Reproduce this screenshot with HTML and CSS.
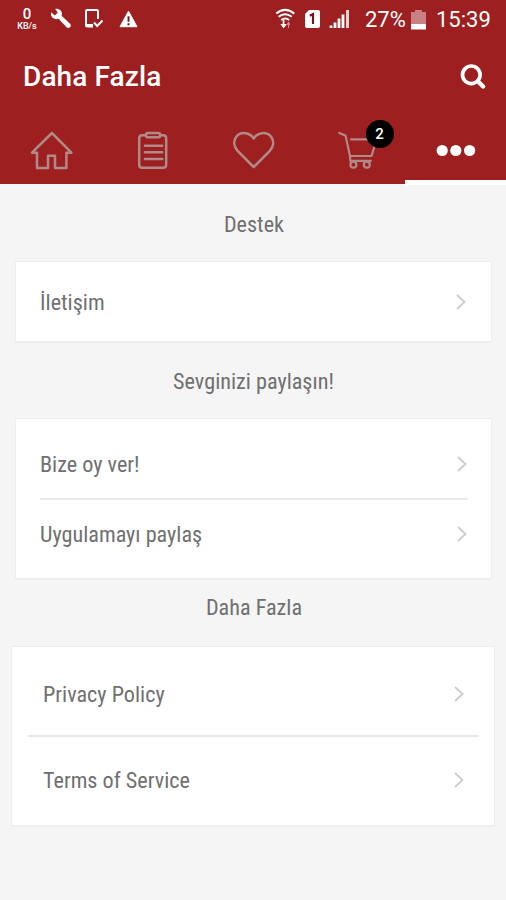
FILE: index.html
```html
<!DOCTYPE html>
<html lang="tr">
<head>
<meta charset="utf-8">
<title>Daha Fazla</title>
<link rel="stylesheet" href="styles.css">
</head>
<body>
<header class="header">
  <div class="status">
    <div class="speed"><span class="speed-value">0</span><span class="speed-unit">KB/s</span></div>
    <svg class="wrench" width="22" height="22" viewBox="0 0 22 22"><path d="M1.2 4.2 4.8 7.5 7.8 4.6 5.2 1C9.5.1 13 3.5 11.6 7.7L20.3 16c1.8 2.1-1.3 5.2-3.5 3.5L8.6 10.8C4.3 12.5 0 9 1.2 4.2Z" fill="#fff"/></svg>
    <svg class="device" width="20" height="22" viewBox="0 0 20 22"><path d="M14 11V3.3Q14 2 12.7 2H3.3Q2 2 2 3.3v14Q2 18.6 3.3 18.6H9" fill="none" stroke="#fff" stroke-width="2"/><path d="M2 17.5h7" stroke="#fff" stroke-width="3"/><path d="m10 14.5 3.2 3.5 5.3-5.5" fill="none" stroke="#fff" stroke-width="2"/></svg>
    <svg class="warning" width="20" height="18" viewBox="0 0 20 18"><path d="M9.5 1.2 18 16.7H1Z" fill="#fff" stroke="#fff" stroke-linejoin="round"/><path d="M9.5 6.2v5.5m0 1.6v2" stroke="#741417" stroke-width="1.9"/></svg>
    <span class="grow"></span>
    <svg class="wifi" width="22" height="22" viewBox="0 0 22 22"><path d="M2.3 5.6Q11-1.8 20.3 5.6M4.6 8.8Q11 3.8 17.8 8.8M7.2 12q4-3 8 0" fill="none" stroke="#fff" stroke-width="2"/><path d="M9.5 12v6M8 16.8l1.6 2.2 1.6-2.2Z" fill="#fff" stroke="#fff" stroke-width="1.7"/><path d="M14.5 20v-6m-1.3 2.5 1.3-2.3 1.3 2.3Z" fill="#cf9294" stroke="#cf9294"/></svg>
    <svg class="sim" width="17" height="20" viewBox="0 0 17 20"><path d="M5 1h9q2 0 2 2v14q0 2-2 2H3q-2 0-2-2V5Z" fill="#fff"/><path d="m5.8 6.8 3.2-1.7V15" fill="none" stroke="#741417" stroke-width="2.2"/></svg>
    <svg class="signal" width="21" height="20" viewBox="0 0 21 20"><path d="M2 16.5V19M6 13.5V19M10 9.5V19M14 5.5V19" stroke="#fff" stroke-width="2.8"/><path d="M18.5 1v18" stroke="#ead0d1" stroke-width="3"/></svg>
    <span class="percent">27%</span>
    <svg class="battery" width="15" height="21" viewBox="0 0 15 21"><path d="M0 3h4V1h7v2h4v12H0Z" fill="#c98082"/><path d="M0 15h15v5.5H0Z" fill="#fff"/></svg>
    <span class="clock">15:39</span>
  </div>
  <div class="bar">
    <h1 class="title">Daha Fazla</h1>
    <svg width="28" height="28" viewBox="0 0 28 28"><circle cx="12.3" cy="11.8" r="8.8" fill="none" stroke="#fff" stroke-width="3.7"/><path d="m18.8 18.3 5.3 5.2" stroke="#fff" stroke-width="4.4" stroke-linecap="round"/></svg>
  </div>
  <nav class="tabs">
    <a class="tab"><svg class="icon" viewBox="0 0 48 48"><path d="M24.9 6 5 25.7h5V41h11V28.7h7V41h11.4V25.7h5Z"/></svg></a>
    <a class="tab"><svg class="icon" viewBox="0 0 48 48"><path d="M17.9 8.3h-3.7q-3 0-3 3v26.4q0 3 3 3h21q3 0 3-3V11.3q0-3-3-3h-3M16.9 18.7h17.3M16.9 25.3h17.3M16.9 32h17.3"/><rect x="17.9" y="5.9" width="14.3" height="4.4" rx="2"/></svg></a>
    <a class="tab"><svg class="icon" viewBox="0 0 48 48"><path d="M24.7 40 8.6 23.8C4.8 19.7 4 14.2 7.3 9.8 11.8 4.2 20.9 5.2 24.7 11.5 28.5 5.2 37.6 4.2 42.1 9.8 45.4 14.2 44.6 19.7 40.8 23.8Z"/></svg></a>
    <a class="tab"><svg class="icon thin" viewBox="0 0 48 48"><path d="m9.3 5.9 6.2 2.7 4.5 20.4h21.5l5.2-16.7H21M20 29l.3 4.8h20.6"/><circle cx="23.4" cy="37.7" r="3"/><circle cx="36.8" cy="37.7" r="3"/></svg><span class="badge">2</span></a>
    <a class="tab active"><svg class="icon dots" viewBox="0 0 48 48"><circle cx="11.2" cy="23.5" r="5.6"/><circle cx="24.8" cy="23.5" r="5.6"/><circle cx="38.6" cy="23.5" r="5.6"/></svg></a>
  </nav>
</header>
<main>
  <h2 class="heading first">Destek</h2>
  <section class="card">
    <a class="row single"><span>İletişim</span><svg class="chevron" viewBox="0 0 12 18"><path d="m2 2 7.5 7L2 16"/></svg></a>
  </section>
  <h2 class="heading">Sevginizi paylaşın!</h2>
  <section class="card share">
    <a class="row"><span>Bize oy ver!</span><svg class="chevron" viewBox="0 0 12 18"><path d="m2 2 7.5 7L2 16"/></svg></a>
    <a class="row"><span>Uygulamayı paylaş</span><svg class="chevron" viewBox="0 0 12 18"><path d="m2 2 7.5 7L2 16"/></svg></a>
  </section>
  <h2 class="heading last">Daha Fazla</h2>
  <section class="card legal">
    <a class="row"><span>Privacy Policy</span><svg class="chevron" viewBox="0 0 12 18"><path d="m2 2 7.5 7L2 16"/></svg></a>
    <a class="row"><span>Terms of Service</span><svg class="chevron" viewBox="0 0 12 18"><path d="m2 2 7.5 7L2 16"/></svg></a>
  </section>
</main>
</body>
</html>
```
FILE: styles.css
```css
* { box-sizing: border-box; }
body { margin: 0; height: 900px; overflow: hidden; background: #f5f5f5; color: #707070; font-family: Roboto, "Liberation Sans", sans-serif; }
svg { display: block; flex: none; }
.header { height: 184px; background: #9d1f20; color: #fff; }
.status { display: flex; align-items: center; height: 38px; padding: 0 15px 0 16px; }
.speed { display: flex; flex-direction: column; align-items: center; width: 22px; }
.speed-value { font-size: 15px; line-height: 15px; font-weight: 500; }
.speed-unit { font-size: 9px; line-height: 9px; font-weight: 500; }
.wrench { margin-left: 12px; }
.device { margin-left: 12px; }
.warning { margin-left: 15px; }
.grow { flex: 1; }
.sim { margin-left: 8px; }
.signal { margin-left: 8px; }
.percent { width: 42px; margin-left: 15px; font-size: 22px; line-height: 38px; padding-top: 2px; white-space: nowrap; }
.battery { margin-left: 4px; }
.clock { width: 55px; margin-left: 10px; font-size: 22px; line-height: 38px; padding-top: 2px; white-space: nowrap; }
.bar { display: flex; align-items: center; justify-content: space-between; height: 80px; padding: 0 19px 3px 23px; }
.title { margin: 0; font-size: 28px; line-height: 34px; font-weight: 500; letter-spacing: 0.1px; }
.tabs { display: flex; height: 66px; }
.tab { position: relative; display: flex; flex: 1; align-items: center; justify-content: center; }
.active::after { content: ""; position: absolute; left: 0; right: 0; bottom: -1px; height: 5px; background: #fff; }
.icon { width: 48px; height: 48px; fill: none; stroke: #b18a87; stroke-width: 2.5; stroke-linejoin: round; stroke-linecap: round; }
.thin { stroke-width: 2.2; }
.dots { fill: #fff; stroke: none; }
.badge { position: absolute; left: 62px; top: 2px; width: 28px; height: 28px; border-radius: 50%; background: #000; color: #fff; font-size: 15px; line-height: 29px; font-weight: 500; text-align: center; }
.heading { height: 75px; margin: 0; padding: 24px 0 0 1px; font: 400 22.2px/28px "Roboto Condensed", Roboto, sans-serif; font-stretch: 75%; text-align: center; }
.first { height: 77px; padding: 26px 0 0 2px; }
.last { height: 66px; padding: 13px 0 0 2px; }
.card { margin: 0 14px 0 15px; background: #fff; border: 1px solid #eee; border-bottom-width: 2px; }
.row { display: flex; align-items: center; justify-content: space-between; height: 70px; font: 400 22.2px/28px "Roboto Condensed", Roboto, sans-serif; font-stretch: 75%; }
.row.single { height: 79px; padding: 0 24px; }
.chevron { width: 12px; height: 18px; fill: none; stroke: #ccc; stroke-width: 1.8; }
.share { height: 162px; padding: 9px 23px 10px 24px; }
.row + .row { border-top: 2px solid #e9e9e9; }
.share .row:first-child { padding-top: 1px; }
.legal { height: 181px; margin: 0 11px; padding: 0 15px 0 16px; }
.legal .row { height: 88px; padding: 5px 15px 0; }
.legal .row + .row { padding-top: 0; }
.legal .chevron { margin-right: -1px; }
```
